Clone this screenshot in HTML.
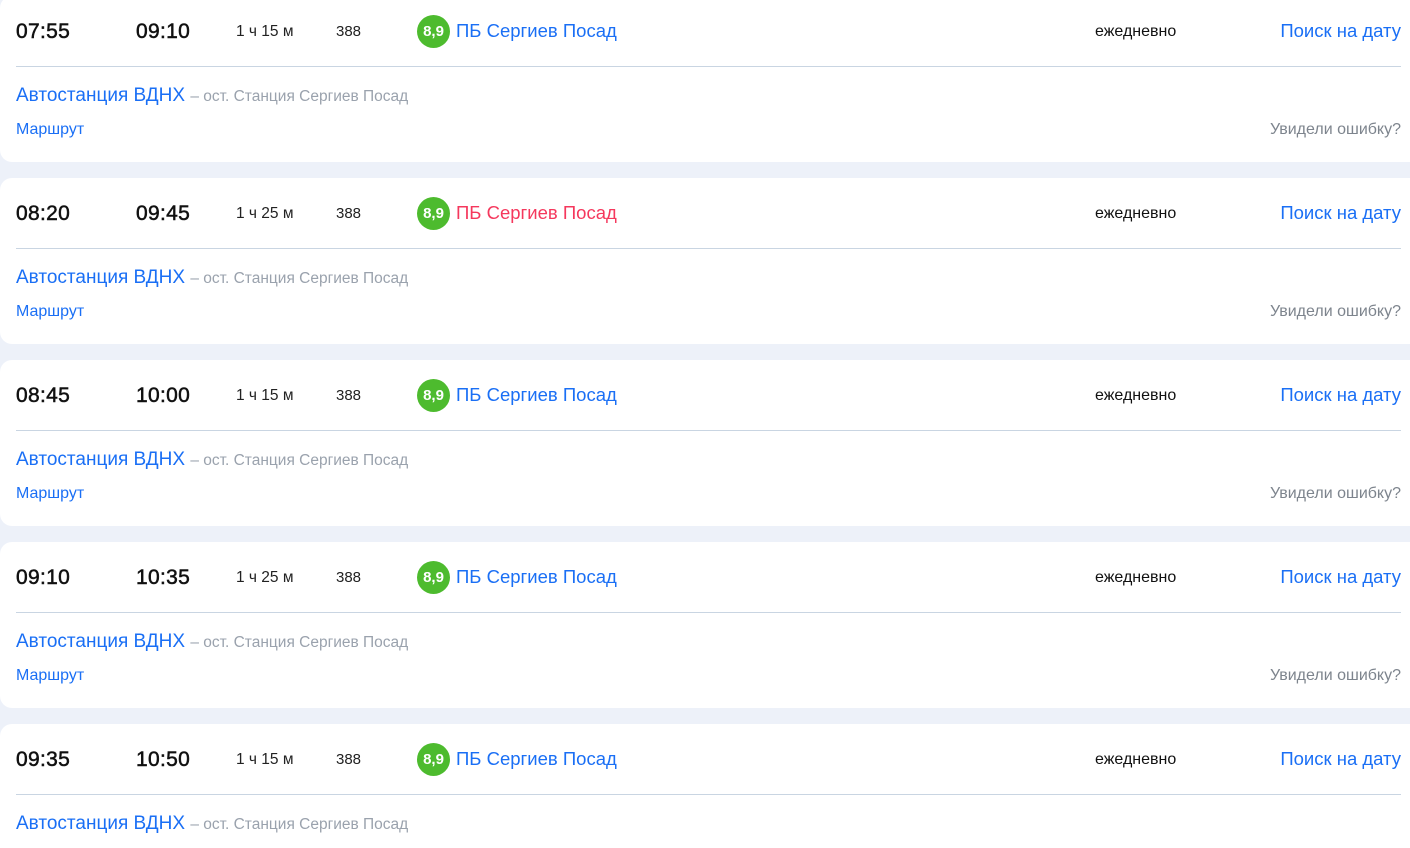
<!DOCTYPE html>
<html><head><meta charset="utf-8"><style>
html,body{margin:0;width:1410px;height:848px;overflow:hidden}
body{background:#edf1f9;font-family:"Liberation Sans",sans-serif;position:relative}
.card{position:absolute;left:0;width:1430px;height:166px;background:#fff;border-radius:12px}
.a{position:absolute;white-space:nowrap;line-height:1}
.t{font-size:21px;color:#111;top:25px;-webkit-text-stroke:0.5px #111;letter-spacing:0.3px}
.d{font-size:15.5px;color:#222;top:28px;left:236px}
.n{font-size:15px;color:#222;top:28px;left:336px}
.b{left:417px;top:19px;width:33px;height:33px;border-radius:50%;background:#4dbb2e;color:#fff;font-weight:bold;font-size:15px;text-align:center;line-height:33px}
.c{left:456px;top:26px;font-size:18.5px;color:#1a6ff5}
.e{left:1095px;top:28px;font-size:16px;color:#111}
.s{right:29px;top:26px;font-size:18.5px;color:#1a6ff5}
.l{position:absolute;left:16px;width:1385px;top:70px;height:1px;background:#c9d5e2}
.st{left:16px;top:90px;font-size:19px;color:#1a6ff5}
.st span{font-size:15.5px;color:#9aa2ad}
.m{left:16px;top:126px;font-size:16px;color:#1a6ff5}
.u{right:29px;top:126px;font-size:16px;color:#7d848d}
</style></head><body>
<div class="card" style="top:-4px"><div class="a t" style="left:16px">07:55</div><div class="a t" style="left:136px">09:10</div><div class="a d">1 ч 15 м</div><div class="a n">388</div><div class="a b">8,9</div><div class="a c">ПБ Сергиев Посад</div><div class="a e">ежедневно</div><div class="a s">Поиск на дату</div><div class="l"></div><div class="a st">Автостанция ВДНХ <span>– ост. Станция Сергиев Посад</span></div><div class="a m">Маршрут</div><div class="a u">Увидели ошибку?</div></div>
<div class="card" style="top:178px"><div class="a t" style="left:16px">08:20</div><div class="a t" style="left:136px">09:45</div><div class="a d">1 ч 25 м</div><div class="a n">388</div><div class="a b">8,9</div><div class="a c" style="color:#f5385d">ПБ Сергиев Посад</div><div class="a e">ежедневно</div><div class="a s">Поиск на дату</div><div class="l"></div><div class="a st">Автостанция ВДНХ <span>– ост. Станция Сергиев Посад</span></div><div class="a m">Маршрут</div><div class="a u">Увидели ошибку?</div></div>
<div class="card" style="top:360px"><div class="a t" style="left:16px">08:45</div><div class="a t" style="left:136px">10:00</div><div class="a d">1 ч 15 м</div><div class="a n">388</div><div class="a b">8,9</div><div class="a c">ПБ Сергиев Посад</div><div class="a e">ежедневно</div><div class="a s">Поиск на дату</div><div class="l"></div><div class="a st">Автостанция ВДНХ <span>– ост. Станция Сергиев Посад</span></div><div class="a m">Маршрут</div><div class="a u">Увидели ошибку?</div></div>
<div class="card" style="top:542px"><div class="a t" style="left:16px">09:10</div><div class="a t" style="left:136px">10:35</div><div class="a d">1 ч 25 м</div><div class="a n">388</div><div class="a b">8,9</div><div class="a c">ПБ Сергиев Посад</div><div class="a e">ежедневно</div><div class="a s">Поиск на дату</div><div class="l"></div><div class="a st">Автостанция ВДНХ <span>– ост. Станция Сергиев Посад</span></div><div class="a m">Маршрут</div><div class="a u">Увидели ошибку?</div></div>
<div class="card" style="top:724px"><div class="a t" style="left:16px">09:35</div><div class="a t" style="left:136px">10:50</div><div class="a d">1 ч 15 м</div><div class="a n">388</div><div class="a b">8,9</div><div class="a c">ПБ Сергиев Посад</div><div class="a e">ежедневно</div><div class="a s">Поиск на дату</div><div class="l"></div><div class="a st">Автостанция ВДНХ <span>– ост. Станция Сергиев Посад</span></div><div class="a m">Маршрут</div><div class="a u">Увидели ошибку?</div></div>
</body></html>
